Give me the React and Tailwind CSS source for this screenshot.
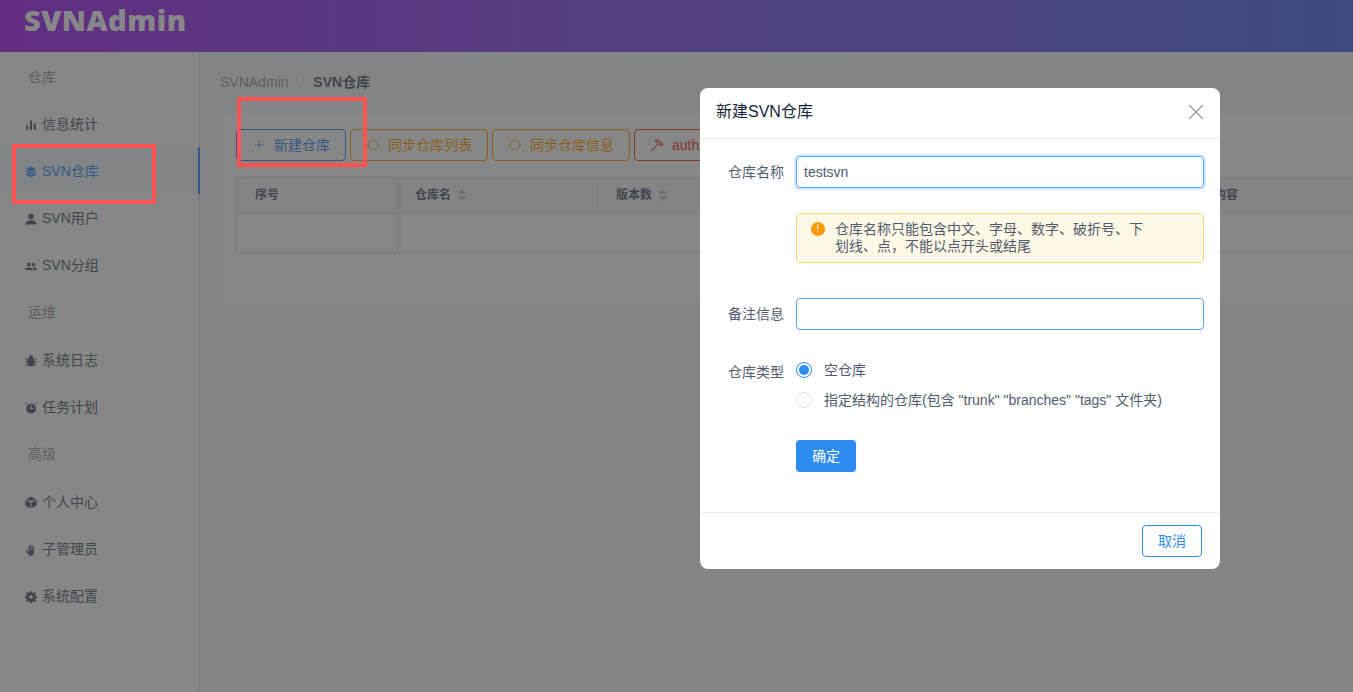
import * as React from "react";
import { Plus, X } from "lucide-react";

const font = "font-['Liberation_Sans','Noto_Sans_CJK_SC',sans-serif]";

function BarIcon() {
  return (
    <svg viewBox="0 0 12 12" className="w-3 h-3 fill-current">
      <path d="M1.2 6.5h2V11h-2zM5 1.5h2V11H5zM8.8 4.5h2V11h-2z" />
    </svg>
  );
}

function LayersIcon() {
  return (
    <svg viewBox="0 0 12 12" className="w-3 h-3 fill-current">
      <path d="M6 .6l5.6 2.6L6 5.8.4 3.2z" />
      <path d="M2 4.9L.4 5.7 6 8.4l5.6-2.7L10 4.9 6 6.8z" />
      <path d="M2 7.6L.4 8.4 6 11.2l5.6-2.8L10 7.6 6 9.5z" />
    </svg>
  );
}

function UserIcon() {
  return (
    <svg viewBox="0 0 12 12" className="w-3 h-3 fill-current">
      <circle cx="6" cy="3.4" r="2.8" />
      <path d="M.4 11.4c0-2.8 2.8-4.2 5.6-4.2s5.6 1.4 5.6 4.2z" />
    </svg>
  );
}

function GroupIcon() {
  return (
    <svg viewBox="0 0 12 12" className="w-3 h-3 fill-current">
      <circle cx="3.8" cy="4.4" r="1.9" />
      <circle cx="8.5" cy="4.4" r="1.7" />
      <path d="M0 10c0-1.9 1.9-2.8 3.8-2.8S7.6 8.100 7.600 10zM8.500 10c0-1.100-.4-2-1.100-2.600 2-.5 4.600.4 4.600 2.600z" />
    </svg>
  );
}

function BugIcon() {
  return (
    <svg viewBox="0 0 12 12" className="w-3 h-3 fill-current">
      <ellipse cx="6" cy="6.800" rx="3.800" ry="4.800" />
      <circle cx="6" cy="2.400" r="2.200" />
      <path d="M0 3.600l.7-.7 2 1.500-.7.800zM12 3.600l-.7-.7-2 1.500.7.800zM0 6.400h2.400v1.100H0zM9.600 6.400H12v1.100H9.600zM.4 10.400l2-1.400.6.900-2 1.400zM11.600 10.400l-2-1.400-.6.900 2 1.400z" />
    </svg>
  );
}

function ClockIcon() {
  return (
    <svg viewBox="0 0 12 12" className="w-3 h-3 fill-current">
      <path
        fillRule="evenodd"
        d="M6 1.800a4.900 4.900 0 110 9.800 4.900 4.900 0 010-9.800zM5.500 3.600v3.500h2.800V6H6.600V3.600z"
      />
      <path d="M0 3.200C0 1.600 1.400.4 3 .6zM12 3.200C12 1.600 10.600.4 9 .6z" />
    </svg>
  );
}

function CubeIcon() {
  return (
    <svg viewBox="0 0 13 13" className="w-[13px] h-[13px] fill-current">
      <path d="M6.500.4l5.600 2.300-5.600 2.400L.9 2.700zM.3 3.700l5.700 2.400v6.500L.3 10zM12.700 3.700L7 6.100v6.500l5.700-2.600z" />
    </svg>
  );
}

function HandIcon() {
  return (
    <svg viewBox="0 0 12 12" className="w-3 h-3 fill-current">
      <path d="M3.400 2.400c0-.8 1-.8 1 0V6h.5V1c0-.8 1.100-.8 1.100 0v5h.5V1.600c0-.8 1.100-.8 1.100 0v4.800h.4V3c0-.8 1-.8 1 0v5.200c0 2.200-1.300 3.600-3.200 3.600-1.700 0-2.500-1-3.200-2.200L.8 7.200c-.4-.7.5-1.300 1-.7l1.600 1.700z" />
    </svg>
  );
}

function GearIcon() {
  return (
    <svg viewBox="0 0 12 12" className="w-3 h-3 fill-current">
      <path
        fillRule="evenodd"
        d="M5 .2h2l.3 1.500 1 .4 1.300-.9 1.400 1.400-.9 1.300.4 1 1.500.3v2l-1.500.3-.4 1 .9 1.300-1.400 1.400-1.300-.9-1 .4-.3 1.500H5l-.3-1.500-1-.4-1.300.9L1 9.700l.9-1.300-.4-1L0 7V5l1.500-.3.4-1L1 2.400 2.400 1l1.300.9 1-.4zM6 4.200a1.800 1.800 0 100 3.600 1.800 1.800 0 000-3.600z"
      />
    </svg>
  );
}

function SyncIcon() {
  return (
    <svg viewBox="0 0 14 14" className="w-[14px] h-[14px] fill-none stroke-current" strokeWidth="1">
      <circle cx="7" cy="7" r="5" opacity="0.8" />
      <path d="M.8 7h2.400M10.800 7h2.400" />
    </svg>
  );
}

function HammerIcon() {
  return (
    <svg viewBox="0 0 14 14" className="w-[14px] h-[14px] fill-none stroke-current" strokeWidth="1.100">
      <path d="M1.500 12.800l6.700-7" />
      <path d="M4.800 2.500c2-.8 3.800-.4 5.200 1l2.800 2.800-1.500 1.400-3-2.700-1.300-.4z" />
    </svg>
  );
}

const sideGroups = [
  {
    title: "仓库",
    titleClass: "h-[47px] flex items-center pl-[28px] pt-[2px] text-[#999]",
    items: [
      { label: "信息统计", icon: <BarIcon /> },
      { label: "SVN仓库", icon: <LayersIcon />, active: true },
      { label: "SVN用户", icon: <UserIcon /> },
      { label: "SVN分组", icon: <GroupIcon /> },
    ],
  },
  {
    title: "运维",
    titleClass: "h-[48px] flex items-center pl-[28px] text-[#999]",
    items: [
      { label: "系统日志", icon: <BugIcon /> },
      { label: "任务计划", icon: <ClockIcon /> },
    ],
  },
  {
    title: "高级",
    titleClass: "h-[48px] flex items-center pl-[28px] text-[#999]",
    items: [
      { label: "个人中心", icon: <CubeIcon /> },
      { label: "子管理员", icon: <HandIcon /> },
      { label: "系统配置", icon: <GearIcon /> },
    ],
  },
];

function Sort() {
  return (
    <span className="flex flex-col gap-[2px] ml-[6px]">
      <span className="w-0 h-0 border-x-[5px] border-x-transparent border-b-[5px] border-b-[#c5c8ce]" />
      <span className="w-0 h-0 border-x-[5px] border-x-transparent border-t-[5px] border-t-[#c5c8ce]" />
    </span>
  );
}

function Sidebar() {
  return (
    <aside className="w-[200px] shrink-0 bg-white border-r border-[#dcdee2] pt-px text-[14px] text-[#515a6e]">
      {sideGroups.map((group) => (
        <div key={group.title}>
          <div className={group.titleClass}>{group.title}</div>
          {group.items.map((item) => (
            <div
              key={item.label}
              className={
                item.active
                  ? "h-[47px] flex items-center pl-[25px] pt-[2px] gap-[5px] bg-[#f0faff] text-[#2d8cf0] border-r-2 border-[#2d8cf0] -mr-px"
                  : "h-[47px] flex items-center pl-[25px] pt-[2px] gap-[5px]"
              }
            >
              <span className="w-3 flex justify-center">{item.icon}</span>
              <span>{item.label}</span>
            </div>
          ))}
        </div>
      ))}
    </aside>
  );
}

function ToolButton({ icon, label, className }) {
  return (
    <button className={"h-8 shrink-0 flex items-center gap-2 px-[15px] rounded border bg-white text-[14px] " + className}>
      <span className="w-[14px] flex justify-center">{icon}</span>
      {label}
    </button>
  );
}

function RecordTable() {
  return (
    <div className="mt-4 w-[1200px] border border-[#dcdee2] text-[12px] font-bold text-[#515a6e]">
      <div className="h-[35px] flex bg-[#f8f8f9] border-b border-[#e8eaec]">
        <div className="w-[161px] shrink-0 pl-[18px] flex items-center border-r border-[#dcdee2] shadow-[2px_0_6px_-2px_rgba(0,0,0,0.15)]">序号</div>
        <div className="w-[200px] shrink-0 pl-[17px] flex items-center border-r border-[#e8eaec]">仓库名<Sort /></div>
        <div className="w-[200px] shrink-0 pl-[18px] flex items-center">版本数<Sort /></div>
        <div className="w-[375px] shrink-0" />
        <div className="flex-1 pl-[17px] flex items-center">仓库内容</div>
      </div>
      <div className="h-[39px] flex">
        <div className="w-[161px] shrink-0 border-r border-[#dcdee2] shadow-[2px_0_6px_-2px_rgba(0,0,0,0.15)]" />
      </div>
    </div>
  );
}

function Content() {
  return (
    <main className="flex-1 min-w-0 bg-[#f5f7f9] pl-5 pt-[20px]">
      <div className="h-5 flex items-center text-[14px] text-[#999]">
        <span>SVNAdmin</span>
        <span className="ml-3 mr-[9px] text-[#dcdee2]">/</span>
        <span className="font-bold text-[#515a6e]">SVN仓库</span>
      </div>
      <div className="mt-[21px] h-[189px] bg-white pl-4 pt-4">
        <div className="flex gap-1">
          <ToolButton className="border-[#2d8cf0] text-[#2d8cf0]" icon={<Plus size={14} strokeWidth={1.5} />} label="新建仓库" />
          <ToolButton className="border-[#ff9900] text-[#ff9900]" icon={<SyncIcon />} label="同步仓库列表" />
          <ToolButton className="border-[#ff9900] text-[#ff9900]" icon={<SyncIcon />} label="同步仓库信息" />
          <ToolButton className="border-[#ed4014] text-[#ed4014]" icon={<HammerIcon />} label="authz检测" />
        </div>
        <RecordTable />
      </div>
    </main>
  );
}

function Radio({ checked, label }) {
  return (
    <div className="h-[30px] flex items-center gap-3 text-[14px] text-[#515a6e]">
      <span
        className={
          checked
            ? "w-4 h-4 rounded-full border border-[#2d8cf0] flex items-center justify-center"
            : "w-4 h-4 rounded-full border border-[#dcdee2]"
        }
      >
        {checked && <span className="w-[10px] h-[10px] rounded-full bg-[#2d8cf0]" />}
      </span>
      <span>{label}</span>
    </div>
  );
}

function RepoModal() {
  return (
    <div className="absolute left-[700px] top-[88px] w-[520px] bg-white rounded-lg flex flex-col text-[14px] text-[#515a6e]">
      <div className="h-[51px] flex items-center justify-between pl-4 pr-[11px] pb-[2px] border-b border-[#e8eaec]">
        <span className="text-[16px] text-[#17233d]">新建SVN仓库</span>
        <X size={26} strokeWidth={1.2} className="text-[#999]" />
      </div>
      <div className="px-4 pt-[17px] pb-10">
        <div className="flex items-center">
          <label className="w-[68px] mr-3 text-right">仓库名称</label>
          <div className="flex-1 h-8 flex items-center px-[7px] rounded border border-[#57a3f3] shadow-[0_0_0_2px_rgba(45,140,240,0.2)]">testsvn</div>
        </div>
        <div className="ml-[80px] mt-[25px] h-[50px] flex pl-[14px] pt-[7px] rounded border border-[#ffd77a] bg-[#fff9e6]">
          <span className="w-[14px] h-[14px] mt-px shrink-0 rounded-full bg-[#ff9900] text-white text-[10px] leading-[14px] text-center">!</span>
          <p className="ml-[10px] w-[312px] leading-[17px]">仓库名称只能包含中文、字母、数字、破折号、下划线、点，不能以点开头或结尾</p>
        </div>
        <div className="flex items-center mt-[35px]">
          <label className="w-[68px] mr-3 text-right">备注信息</label>
          <div className="flex-1 h-8 rounded border border-[#57a3f3]" />
        </div>
        <div className="flex mt-[25px]">
          <label className="w-[68px] mr-3 text-right leading-[30px] pt-[2px]">仓库类型</label>
          <div>
            <Radio checked label="空仓库" />
            <Radio label={'指定结构的仓库(包含 "trunk" "branches" "tags" 文件夹)'} />
          </div>
        </div>
        <button className="block ml-[80px] mt-[25px] w-[60px] h-8 rounded bg-[#2d8cf0] text-white">确定</button>
      </div>
      <div className="h-[57px] flex justify-end items-center pr-[18px] border-t border-[#e8eaec]">
        <button className="w-[60px] h-8 rounded border border-[#2d8cf0] text-[#2d8cf0]">取消</button>
      </div>
    </div>
  );
}

export default function App() {
  return (
    <div className={"relative h-[692px] overflow-hidden flex flex-col bg-white " + font}>
      <header className="h-[52px] shrink-0 bg-gradient-to-r from-[#a21ef5] to-[#4866ed] px-6">
        <span className="font-['Open_Sans',sans-serif] font-extrabold text-[29px] leading-[40px] tracking-[0.5px] text-white">SVNAdmin</span>
      </header>
      <div className="flex-1 flex min-h-0">
        <Sidebar />
        <Content />
      </div>
      <div className="absolute inset-0 bg-[rgba(55,55,55,0.6)]" />
      <RepoModal />
      <div className="absolute left-[12px] top-[144px] w-[144px] h-[60px] border-4 border-[#ff5252]" />
      <div className="absolute left-[237px] top-[97px] w-[130px] h-[70px] border-4 border-[#ff5252]" />
    </div>
  );
}
